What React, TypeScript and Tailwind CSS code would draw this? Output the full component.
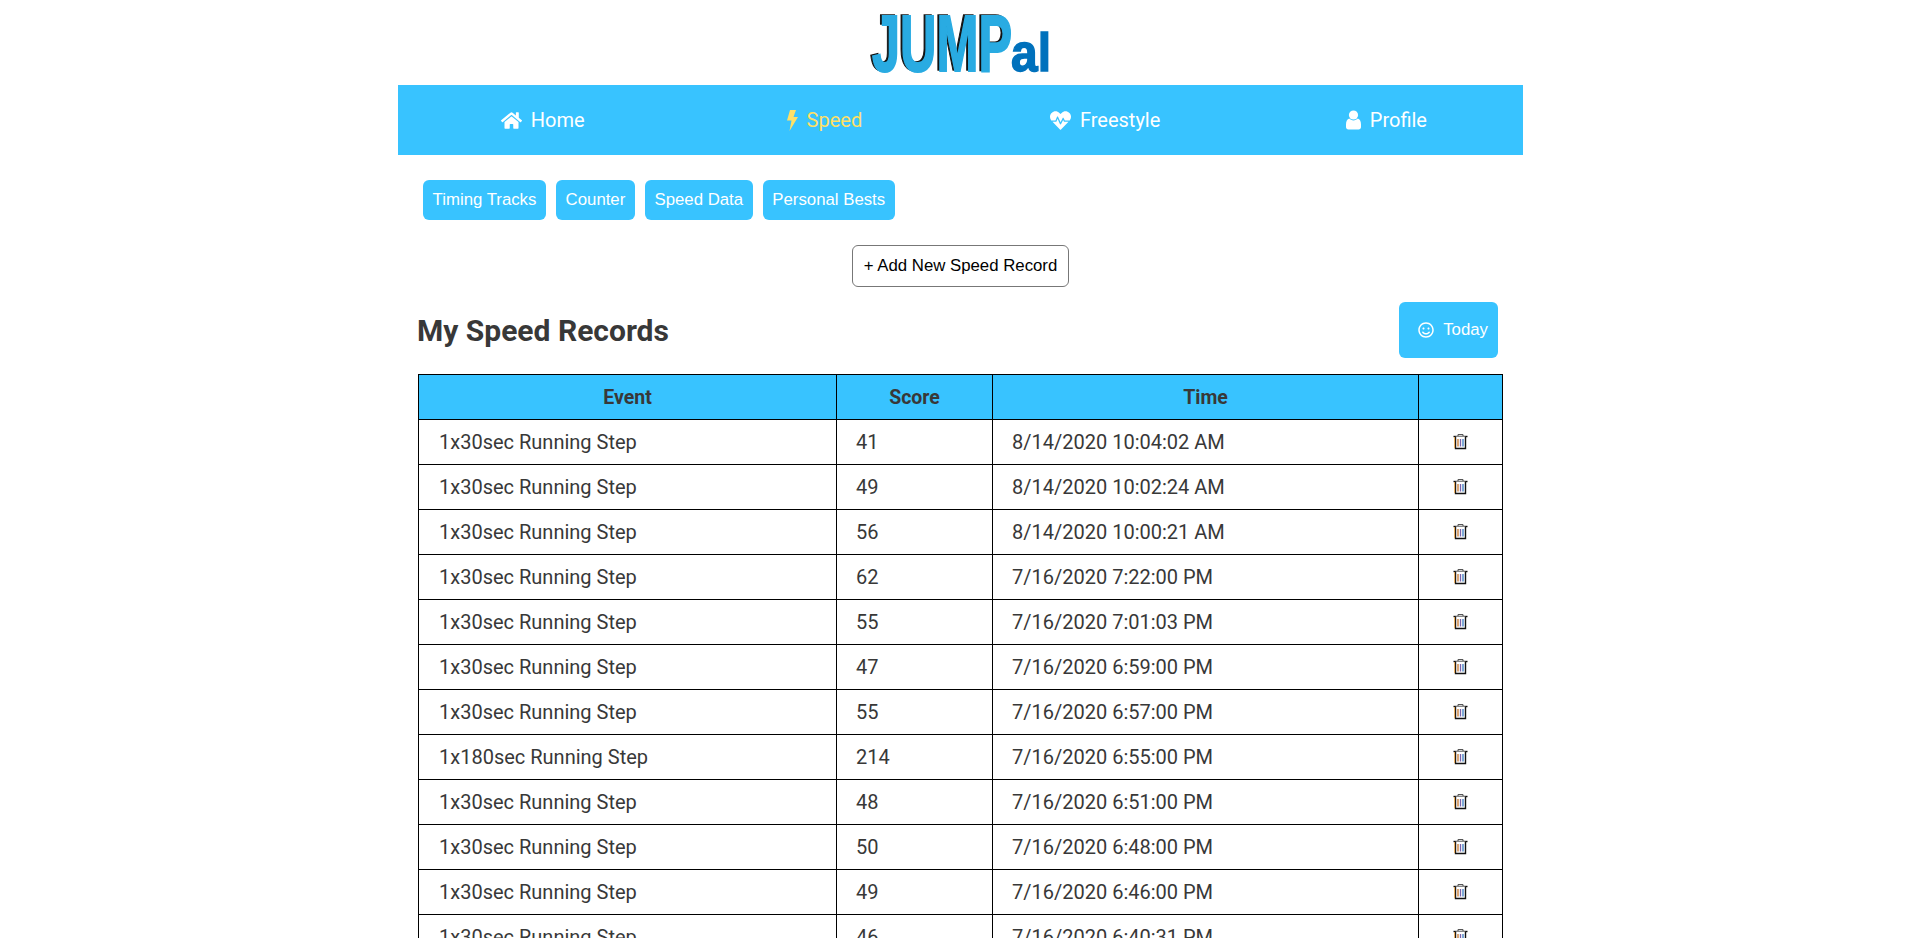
import { FaHome, FaHeartbeat, FaRegSmile } from "react-icons/fa";

const records = [
  ["1x30sec Running Step", "41", "8/14/2020 10:04:02 AM"],
  ["1x30sec Running Step", "49", "8/14/2020 10:02:24 AM"],
  ["1x30sec Running Step", "56", "8/14/2020 10:00:21 AM"],
  ["1x30sec Running Step", "62", "7/16/2020 7:22:00 PM"],
  ["1x30sec Running Step", "55", "7/16/2020 7:01:03 PM"],
  ["1x30sec Running Step", "47", "7/16/2020 6:59:00 PM"],
  ["1x30sec Running Step", "55", "7/16/2020 6:57:00 PM"],
  ["1x180sec Running Step", "214", "7/16/2020 6:55:00 PM"],
  ["1x30sec Running Step", "48", "7/16/2020 6:51:00 PM"],
  ["1x30sec Running Step", "50", "7/16/2020 6:48:00 PM"],
  ["1x30sec Running Step", "49", "7/16/2020 6:46:00 PM"],
  ["1x30sec Running Step", "46", "7/16/2020 6:40:31 PM"],
];

const subLinks = ["Timing Tracks", "Counter", "Speed Data", "Personal Bests"];

function Bolt() {
  return (
    <svg width="12" height="21" viewBox="0 0 12 21" fill="#ffe066">
      <polygon points="4,0 10,0 7.5,7 12,7 3.5,21 5.5,10.5 1,10.5" />
    </svg>
  );
}

function UserIcon() {
  return (
    <svg width="15" height="20" viewBox="0 0 15 20" fill="white">
      <circle cx="7.5" cy="5" r="4.6" />
      <path d="M3.2 8.6C4.4 9.8 5.8 10.4 7.5 10.4S10.6 9.8 11.8 8.6C13.8 9.2 15 11.2 15 14.5V17C15 18.6 14 19.5 12.6 19.5H2.4C1 19.5 0 18.6 0 17V14.5C0 11.2 1.2 9.2 3.2 8.6Z" />
    </svg>
  );
}

function TrashIcon() {
  return (
    <svg width="15" height="17" viewBox="0 0 15 17" className="mx-auto mb-[2px]">
      <path d="M5 3V1.5h5V3" fill="none" stroke="#555" strokeWidth="1" />
      <path d="M0.5 3.5h14" stroke="#111" strokeWidth="1.4" />
      <path d="M2.5 3.5v12h10v-12" fill="#fff" stroke="#111" strokeWidth="1.4" />
      <path d="M1.6 4v11" stroke="#f5a53a" strokeWidth="0.8" />
      <path d="M5 6v7.5" stroke="#c9792b" strokeWidth="1.3" />
      <path d="M7.5 6v7.5" stroke="#7a5fa8" strokeWidth="1.3" />
      <path d="M10 6v7.5" stroke="#3a7cc2" strokeWidth="1.3" />
    </svg>
  );
}

export default function App() {
  return (
    <div className="h-[938px] overflow-hidden bg-white font-['Roboto',sans-serif] text-[#383838]">
      <div className="ml-[398px] w-[1125px]">
        <div className="flex h-[85px] justify-center">
          <svg width="190" height="85" viewBox="0 0 190 85">
            <text x="4" y="70" fontFamily="Liberation Sans" fontWeight="700" fontSize="80" textLength="140" lengthAdjust="spacingAndGlyphs" fill="#111" stroke="#111" strokeWidth="1.5">JUMP</text>
            <text x="6" y="71" fontFamily="Liberation Sans" fontWeight="700" fontSize="80" textLength="140" lengthAdjust="spacingAndGlyphs" fill="#29abe2" stroke="#29abe2" strokeWidth="2">JUMP</text>
            <text x="145" y="71" fontFamily="Liberation Sans" fontWeight="700" fontSize="54" textLength="40" lengthAdjust="spacingAndGlyphs" fill="#0071bc" stroke="#0071bc" strokeWidth="1.5">al</text>
          </svg>
        </div>
        <nav className="grid h-[70px] grid-cols-4 bg-[#38c3ff] text-[20px] text-white">
          <a className="flex items-center justify-center gap-[9px] pl-[8px]"><FaHome size={21} />Home</a>
          <a className="flex items-center justify-center gap-[9px] pl-[8px] text-[#ffe066]"><Bolt />Speed</a>
          <a className="flex items-center justify-center gap-[9px] pl-[8px]"><FaHeartbeat size={21} />Freestyle</a>
          <a className="flex items-center justify-center gap-[9px] pl-[8px]"><UserIcon />Profile</a>
        </nav>
        <div className="flex gap-[10px] pl-[25px] pt-[25px] font-['Liberation_Sans',sans-serif] text-[16.8px] text-white">
          {subLinks.map((s) => (
            <button key={s} className="flex h-10 items-center rounded-md bg-[#38c3ff] px-[9.6px]">{s}</button>
          ))}
        </div>
        <div className="flex justify-center pt-[25px]">
          <button className="h-[42px] rounded-md border border-[#777] px-[10.5px] font-['Liberation_Sans',sans-serif] text-[16.8px] text-black">+ Add New Speed Record</button>
        </div>
        <div className="flex items-center justify-between pl-[19px] pr-[25px] pt-[15px]">
          <h2 className="pt-[1px] text-[30px] font-bold">My Speed Records</h2>
          <button className="flex h-[56px] items-center gap-[9px] rounded-md bg-[#38c3ff] pl-[19px] pr-[10px] font-['Liberation_Sans',sans-serif] text-[16.8px] text-white"><FaRegSmile size={16} />Today</button>
        </div>
        <table className="ml-[20px] mt-[16px] w-[1085px] table-fixed border-collapse text-[20px]">
          <thead>
            <tr className="h-[45px] bg-[#38c3ff] text-[19.5px] font-bold">
              <th className="w-[418px] border border-black pt-[1px]">Event</th>
              <th className="w-[156px] border border-black pt-[1px]">Score</th>
              <th className="w-[426px] border border-black pt-[1px]">Time</th>
              <th className="border border-black"></th>
            </tr>
          </thead>
          <tbody>
            {records.map((r, i) => (
              <tr key={i} className="h-[45px]">
                <td className="border border-black pl-[20px]">{r[0]}</td>
                <td className="border border-black pl-[19px]">{r[1]}</td>
                <td className="border border-black pl-[19px]">{r[2]}</td>
                <td className="border border-black text-center"><TrashIcon /></td>
              </tr>
            ))}
          </tbody>
        </table>
      </div>
    </div>
  );
}
